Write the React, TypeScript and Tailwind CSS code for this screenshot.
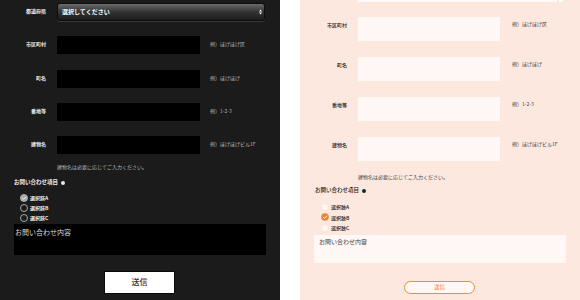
import React from "react";

const font = { fontFamily: '"Noto Sans CJK JP", "Noto Sans", sans-serif' };

function DarkRow({ label, hint, mt }: { label: string; hint: string; mt: string }) {
  return (
    <div className={`flex ${mt}`}>
      <div className="w-[57px] pr-[11px] pt-[5px] text-right text-[5px] leading-none font-bold text-[#ededed]">{label}</div>
      <div className="w-[143px] h-[18px] bg-black" />
      <div className="ml-[10px] pt-[5px] text-[5px] leading-none text-[#b5b5b5]">{hint}</div>
    </div>
  );
}

function LightRow({ label, hint, mt }: { label: string; hint: string; mt: string }) {
  return (
    <div className={`flex ${mt}`}>
      <div className="w-[58px] pr-[11px] pt-[5px] text-right text-[5px] leading-none font-medium text-[#222]">{label}</div>
      <div className="w-[142px] h-[24px] bg-[#fff8f4]" />
      <div className="ml-[12px] pt-[4px] text-[5px] leading-none text-[#444]">{hint}</div>
    </div>
  );
}

function DarkRadio({ checked, label }: { checked?: boolean; label: string }) {
  return (
    <div className="flex items-center h-[10px]">
      <svg width="8" height="8" viewBox="0 0 8 8" className="block">
        {checked ? (
          <>
            <circle cx="4" cy="4" r="3.6" fill="#a8a8a8" stroke="#d0d0d0" strokeWidth="0.6" />
            <path d="M2.2 4.1 L3.5 5.3 L5.9 2.8" fill="none" stroke="#fff" strokeWidth="0.9" />
          </>
        ) : (
          <circle cx="4" cy="4" r="3.5" fill="none" stroke="#e0e0e0" strokeWidth="0.7" />
        )}
      </svg>
      <span className="ml-[2px] text-[5px] leading-none font-bold text-[#ededed]">{label}</span>
    </div>
  );
}

function LightRadio({ checked, label }: { checked?: boolean; label: string }) {
  return (
    <div className="flex items-center h-[10.5px]">
      <svg width="8" height="8" viewBox="0 0 8 8" className="block">
        {checked ? (
          <>
            <circle cx="4" cy="4" r="3.8" fill="#ee8236" />
            <path d="M2.2 4.1 L3.5 5.4 L5.9 2.8" fill="none" stroke="#fff" strokeWidth="1" />
          </>
        ) : (
          <circle cx="4" cy="4" r="3.5" fill="#fff8f4" stroke="#f0ddd3" strokeWidth="0.6" />
        )}
      </svg>
      <span className="ml-[2px] text-[5px] leading-none font-medium text-[#222]">{label}</span>
    </div>
  );
}

export default function App() {
  return (
    <div className="flex w-[580px] h-[300px] bg-white overflow-hidden" style={font}>
      {/* Dark panel */}
      <div className="w-[280px] h-[300px] bg-[#1b1b1b] flex flex-col">
        <div className="flex mt-[3px]">
          <div className="w-[57px] pr-[11px] pt-[5px] text-right text-[5px] leading-none font-bold text-[#ededed]">都道府県</div>
          <div className="w-[208px] h-[18px] rounded-[3px] border border-[#0c0c0c] bg-linear-to-b from-[#6b6b6b] via-[#333333] to-[#1c1c1c] flex items-center justify-between pl-[4px] pr-[2px] shadow-[0_1px_0_#3a3a3a]">
            <span className="text-[6px] leading-none font-bold text-white">選択してください</span>
            <svg width="3" height="6" viewBox="0 0 3 6">
              <path d="M0 2.4 L1.5 0.6 L3 2.4 Z" fill="#fff" />
              <path d="M0 3.6 L1.5 5.4 L3 3.6 Z" fill="#fff" />
            </svg>
          </div>
        </div>
        <DarkRow label="市区町村" hint="例）ほげほげ区" mt="mt-[15px]" />
        <DarkRow label="町名" hint="例）ほげほげ" mt="mt-[16px]" />
        <DarkRow label="番地等" hint="例）1-2-3" mt="mt-[15px]" />
        <DarkRow label="建物名" hint="例）ほげほげビル1F" mt="mt-[15px]" />
        <div className="ml-[57px] mt-[10px] text-[5px] leading-none text-[#b5b5b5]">建物名は必要に応じてご入力ください。</div>
        <div className="ml-[14px] mt-[11px] flex items-center text-[5.5px] leading-none font-bold text-[#ededed]">
          お問い合わせ項目
          <span className="ml-[3px] inline-block w-[4px] h-[4px] rounded-full bg-[#e8e8e8]" />
        </div>
        <div className="ml-[20px] mt-[7px] flex flex-col">
          <DarkRadio checked label="選択肢A" />
          <DarkRadio label="選択肢B" />
          <DarkRadio label="選択肢C" />
        </div>
        <div className="ml-[14px] mt-[1px] w-[252px] h-[31px] bg-black pt-[5px] pl-[1px] text-[7px] leading-none text-[#dcdcdc]">お問い合わせ内容</div>
        <div className="mt-[16px] ml-[104px] w-[71px] h-[23px] bg-white border border-[#0a0a0a] flex items-center justify-center text-[8px] leading-none font-medium text-[#333]">送信</div>
      </div>

      <div className="w-[20px]" />

      {/* Light panel */}
      <div className="w-[280px] h-[300px] bg-[#fde8df] flex flex-col">
        <div className="-mt-[22px] ml-[58px] w-[205px] h-[24px] flex">
          <div className="w-[200px] h-[24px] bg-[#fffaf7]" />
          <div className="ml-[2px] w-[4px] h-[24px] bg-[#fffaf7]" />
        </div>
        <LightRow label="市区町村" hint="例）ほげほげ区" mt="mt-[15px]" />
        <LightRow label="町名" hint="例）ほげほげ" mt="mt-[16px]" />
        <LightRow label="番地等" hint="例）1-2-3" mt="mt-[16px]" />
        <LightRow label="建物名" hint="例）ほげほげビル1F" mt="mt-[16px]" />
        <div className="ml-[58px] mt-[13px] text-[5px] leading-none text-[#444]">建物名は必要に応じてご入力ください。</div>
        <div className="ml-[15px] mt-[9px] flex items-center text-[5.5px] leading-none font-medium text-[#222]">
          お問い合わせ項目
          <span className="ml-[3px] inline-block w-[4px] h-[4px] rounded-full bg-[#222]" />
        </div>
        <div className="ml-[21px] mt-[8px] flex flex-col">
          <LightRadio label="選択肢A" />
          <LightRadio checked label="選択肢B" />
          <LightRadio label="選択肢C" />
        </div>
        <div className="ml-[14px] mt-[2px] w-[252px] h-[28px] bg-[#fff8f4] pt-[4px] pl-[5px] text-[6px] leading-none text-[#444]">お問い合わせ内容</div>
        <div className="mt-[18px] ml-[104px] w-[71px] h-[13px] rounded-full border-[1.5px] border-[#f0883e] bg-[#fff8f4] flex items-center justify-center text-[5.5px] leading-none text-[#ee7d2e]">送信</div>
      </div>
    </div>
  );
}
